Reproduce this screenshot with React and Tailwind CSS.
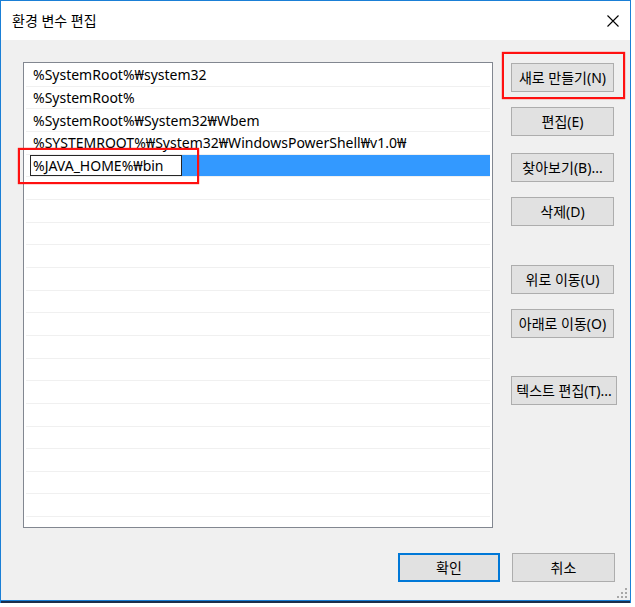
import React from 'react';

const font = { fontFamily: '"Noto Sans", "Noto Sans CJK KR", sans-serif' };

const paths = [
  '%SystemRoot%₩system32',
  '%SystemRoot%',
  '%SystemRoot%₩System32₩Wbem',
  '%SYSTEMROOT%₩System32₩WindowsPowerShell₩v1.0₩',
];

// 오른쪽 버튼 목록 (위쪽 여백은 스크린샷 기준)
const sideButtons = [
  { label: '새로 만들기(N)', mt: 'mt-[1px]' },
  { label: '편집(E)', mt: 'mt-[15px]' },
  { label: '찾아보기(B)...', mt: 'mt-[17px]' },
  { label: '삭제(D)', mt: 'mt-[15px]' },
  { label: '위로 이동(U)', mt: 'mt-[39px]' },
  { label: '아래로 이동(O)', mt: 'mt-[15px]' },
  { label: '텍스트 편집(T)...', mt: 'mt-[38px]', wide: true },
];

const WinButton = ({ label, className = '' }) => (
  <div
    className={`h-[29px] flex items-center justify-center bg-[#e1e1e1] border border-[#adadad] text-[14px] text-black whitespace-nowrap overflow-hidden ${className}`}
  >
    {label}
  </div>
);

const Row = ({ children }) => (
  <div className="h-[22.67px] mx-[2px] border-b border-[#f0f0f0] flex items-center pl-[7px] text-[14px] text-black whitespace-nowrap overflow-hidden">
    {children}
  </div>
);

export default function App() {
  const empty = Array.from({ length: 15 });

  return (
    <div className="w-[635px] h-[607px] bg-white overflow-hidden" style={font}>
      <div className="w-[631px] h-[603px] flex flex-col border-x border-t border-[#1a7fd6] relative">
        {/* 타이틀 바 */}
        <div className="h-[39px] bg-white flex items-center justify-between pl-[11px] pr-[10px] shrink-0">
          <span className="text-[14px] text-black">환경 변수 편집</span>
          <svg width="12" height="12" viewBox="0 0 12 12" className="mr-[1px]">
            <path d="M0.5 0.5L11.5 11.5M11.5 0.5L0.5 11.5" stroke="#000" strokeWidth="1.1" fill="none" />
          </svg>
        </div>

        {/* 본문 */}
        <div className="flex-1 bg-[#f0f0f0] pt-[22px] pl-[22px] pr-[15px] flex flex-col">
          <div className="flex gap-[18px]">
            {/* 목록 */}
            <div className="w-[470px] h-[466px] pt-[1px] bg-white border border-[#828790] overflow-hidden">
              {paths.map((p) => (
                <Row key={p}>{p}</Row>
              ))}
              <div className="h-[22.67px] mx-[2px] border-b border-[#f0f0f0] flex items-stretch">
                <div className="w-[4px] bg-white" />
                <div className="w-[152px] bg-white border border-[#262626] flex items-center pl-[2px] text-[14px] text-black whitespace-nowrap">
                  %JAVA_HOME%₩bin
                </div>
                <div className="flex-1 bg-[#3399ff]" />
              </div>
              {empty.map((_, i) => (
                <Row key={i} />
              ))}
            </div>

            {/* 버튼 */}
            <div className="flex flex-col w-[103px]">
              {sideButtons.map((b) => (
                <WinButton key={b.label} label={b.label} className={`${b.mt} ${b.wide ? 'w-[106px]' : 'w-[103px]'}`} />
              ))}
            </div>
          </div>

          {/* 확인 / 취소 */}
          <div className="flex justify-end gap-[12px] mt-[25px]">
            <div className="w-[102px] h-[29px] flex items-center justify-center bg-[#e1e1e1] border-2 border-[#0078d7] text-[14px] text-black">
              확인
            </div>
            <WinButton label="취소" className="w-[103px]" />
          </div>
        </div>

        {/* 크기 조절 그립 */}
        <svg width="10" height="10" viewBox="0 0 10 10" className="absolute right-[3px] bottom-[5px]">
          <rect x="8" y="0" width="2" height="2" fill="#a8a8a8" />
          <rect x="4" y="4" width="2" height="2" fill="#a8a8a8" />
          <rect x="8" y="4" width="2" height="2" fill="#a8a8a8" />
          <rect x="0" y="8" width="2" height="2" fill="#a8a8a8" />
          <rect x="4" y="8" width="2" height="2" fill="#a8a8a8" />
          <rect x="8" y="8" width="2" height="2" fill="#a8a8a8" />
        </svg>

        <div className="h-[1px] bg-[#1a7fd6] shrink-0" />
        <div className="h-[2px] bg-[#1c2f4a] shrink-0" />

        {/* 빨간 강조 표시 */}
        <div className="absolute left-[17px] top-[147px] w-[181px] h-[36px] border-2 border-[#ff1010] shadow-[0_0_1px_#ff0000]" />
        <div className="absolute left-[501px] top-[51px] w-[123px] h-[47px] border-2 border-[#ff1010] shadow-[0_0_1px_#ff0000]" />
      </div>
    </div>
  );
}
